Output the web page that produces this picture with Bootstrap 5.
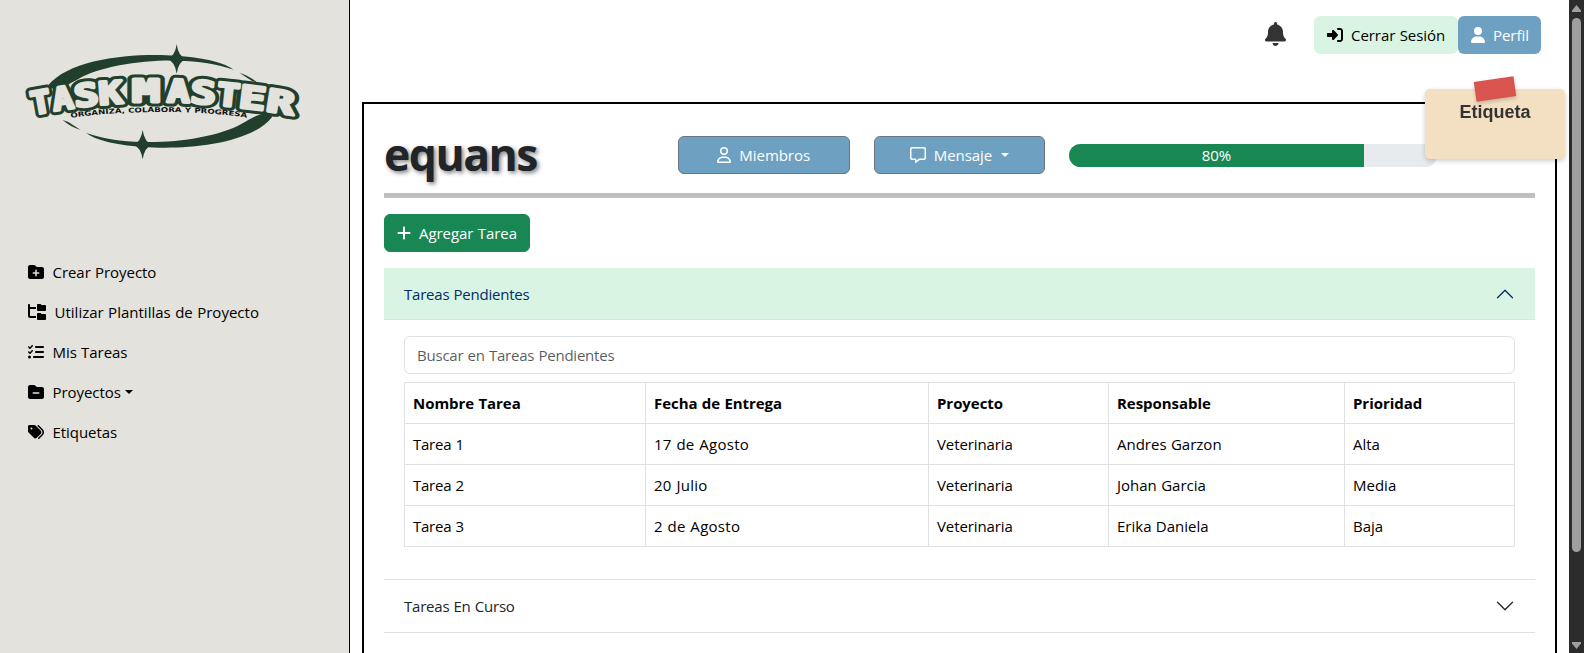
<!DOCTYPE html>
<html lang="es">
<head>
<meta charset="utf-8">
<meta name="viewport" content="width=device-width, initial-scale=1">
<title>Task Master</title>
<link href="https://cdn.jsdelivr.net/npm/bootstrap@5.3.0/dist/css/bootstrap.min.css" rel="stylesheet">
<style>
  body { font-family: "Open Sans", "Noto Sans", sans-serif; font-size: 15px; line-height: 24px; letter-spacing: -.05px; word-spacing: .5px; }
  .btn, .form-control, .accordion-button { font-size: 15px; line-height: 24px; letter-spacing: inherit; word-spacing: inherit; }
  .form-control, .accordion-button { letter-spacing: -.22px; }
  .ico { height: 16px; fill: currentColor; flex: none; }
  .sidebar { width: 350px; background: #e3e2dd; border-right: 1px solid #000; }
  .brand { margin: 30px 0 0 10px; width: 300px; height: 140px; }
  .side-menu { margin-top: 82px; padding-left: 28px; }
  .side-menu .nav-link { color: #000; padding: 8px 0; height: 40px; gap: 8.5px; }
  .side-menu .long-label { letter-spacing: .01px; }
  .topbar { height: 90px; padding: 16px 28px 0 0; }
  .bell { height: 24px; color: #333; margin: 6px 28px 0 0; }
  .btn-mint, .btn-mint:hover { background: #d9f4e3; color: #000; }
  .btn-sky, .btn-sky:hover, .btn-sky.btn-secondary { background: #6ea1c1; color: #fff; }
  .btn-sky.dropdown-toggle::after { margin-left: 1px; }
  .board { border: 2px solid #000; margin: 12px 12px 0; padding: 20px 20px 0; height: 1000px; }
  .project-name { font-size: 44.5px; line-height: 59px; font-weight: 700; letter-spacing: -1.5px; text-shadow: 2px 2px 4px rgba(0,0,0,.5); }
  .head-row { height: 69px; }
  .head-row .tool { padding-top: 12px; }
  .head-row .meter { padding-top: 20px; }
  .progress { height: 23px; border-radius: 12px; background: #e7ebee; font-size: 15px; line-height: 22px; }
  .progress-bar { background: #198754; padding-bottom: 1px; }
  .rule { height: 5px; background: #bfbfbf; margin-bottom: 16px; }
  .accordion-button { padding: 14px 20px; height: 52px; }
  .accordion-button.closed-head { color: #212529; background: #fff; }
  .accordion-button:not(.collapsed) { background: #d9f4e3; color: #052c65; box-shadow: inset 0 -1px 0 #dee2e6; }
  .accordion-button::after { width: 20px; height: 20px; background-size: 20px; }
  .accordion-button:not(.collapsed)::after { background-image: url("data:image/svg+xml,%3csvg xmlns='http://www.w3.org/2000/svg' viewBox='0 0 16 16' fill='%23052c65'%3e%3cpath fill-rule='evenodd' d='M1.646 4.646a.5.5 0 0 1 .708 0L8 10.293l5.646-5.647a.5.5 0 0 1 .708.708l-6 6a.5.5 0 0 1-.708 0l-6-6a.5.5 0 0 1 0-.708z'/%3e%3c/svg%3e"); }
  .accordion-body { padding: 16px 20px 32px; }
  .tasks { table-layout: fixed; }
  .tasks > :not(caption) > * > * { color: #000; height: 41px; }
  .tasks td { letter-spacing: 0; }
  .tasks td:nth-child(1) { letter-spacing: -.25px; }
  .tasks td:nth-child(2) { letter-spacing: .28px; }
  .tasks td:nth-child(3) { letter-spacing: -.1px; }
  .note-tag { position: fixed; left: 1425px; top: 89px; width: 140px; height: 70px; background: #f3dfc1; border-radius: 5px; box-shadow: 0 2px 5px rgba(0,0,0,.2); color: #333; font: bold 18px/22px "Liberation Sans", Arial, sans-serif; letter-spacing: 0; padding-top: 12px; text-align: center; z-index: 5; }
  .note-tag::before { content: ""; position: absolute; left: 50px; top: -10px; width: 40px; height: 20px; background: #d9534f; transform: rotate(-8deg); box-shadow: 0 2px 4px rgba(0,0,0,.2); }
  .scroll-rail { width: 15px; background: #2c2c2c; padding: 5px 0 4px; }
  .scroll-grip { width: 9px; height: 534px; border-radius: 5px; background: #9f9f9f; margin-top: 6px; }
  .scroll-rail svg { width: 9px; height: 7px; fill: #9f9f9f; }
</style>
</head>
<body>
<div class="d-flex vh-100 overflow-hidden">
  <aside class="sidebar flex-shrink-0">
    <svg class="brand d-block" viewBox="0 0 900 420" role="img" aria-label="Task Master">
      <defs>
        <path id="swoosh" d="M113 168C180 82 380 68 500 77C590 83 650 101 671 119C620 102 570 93 500 92C390 90 270 110 205 147C170 165 140 190 113 168ZM688 128Q720 138 742 158L725 152Z"/>
        <path id="spark" d="M0-44Q5-8 28 0Q5 8 0 44Q-5 8-28 0Q-5-8 0-44Z"/>
        <g id="letters" font-family="DejaVu Sans Mono" font-weight="bold" font-size="94">
          <text transform="translate(68 254) rotate(-10)" textLength="60" lengthAdjust="spacingAndGlyphs">T</text>
          <text transform="translate(132 242) rotate(-8)" textLength="62" lengthAdjust="spacingAndGlyphs">A</text>
          <text transform="translate(196 232) rotate(-6)" textLength="73" lengthAdjust="spacingAndGlyphs">S</text>
          <text transform="translate(268 224) rotate(-4)" textLength="72" lengthAdjust="spacingAndGlyphs">K</text>
          <text transform="translate(366 216)" textLength="84" lengthAdjust="spacingAndGlyphs">M</text>
          <text transform="translate(470 216) rotate(1)" textLength="68" lengthAdjust="spacingAndGlyphs">A</text>
          <text transform="translate(540 218) rotate(4)" textLength="76" lengthAdjust="spacingAndGlyphs">S</text>
          <text transform="translate(618 224) rotate(6)" textLength="68" lengthAdjust="spacingAndGlyphs">T</text>
          <text transform="translate(684 232) rotate(7)" textLength="80" lengthAdjust="spacingAndGlyphs">E</text>
          <text transform="translate(766 242) rotate(9)" textLength="84" lengthAdjust="spacingAndGlyphs">R</text>
        </g>
        <path id="motto" d="M182 263Q310 246 450 246Q600 246 712 263"/>
      </defs>
      <g fill="#213f2c">
        <use href="#swoosh"/>
        <use href="#swoosh" transform="rotate(180 450 214)"/>
        <use href="#spark" transform="translate(500 87)"/>
        <use href="#spark" transform="translate(398 344)"/>
      </g>
      <use href="#letters" fill="#213f2c" stroke="#213f2c" stroke-width="27" stroke-linejoin="round"/>
      <use href="#letters" fill="#e3e2dd" stroke="#e3e2dd" stroke-width="9" stroke-linejoin="round"/>
      <text font-family="DejaVu Sans" font-weight="bold" font-size="20" fill="#111"><textPath href="#motto" textLength="530" lengthAdjust="spacingAndGlyphs">ORGANIZA, COLABORA Y PROGRESA</textPath></text>
    </svg>
    <nav class="side-menu nav flex-column">
      <a class="nav-link d-flex align-items-center" href="#"><svg class="ico" viewBox="0 0 512 512"><path d="M512 416c0 35.3-28.7 64-64 64H64c-35.3 0-64-28.7-64-64V96C0 60.7 28.7 32 64 32H192c20.1 0 39.1 9.5 51.2 25.6l19.2 25.6c6 8.1 15.5 12.8 25.6 12.8H448c35.3 0 64 28.7 64 64V416zM232 376c0 13.3 10.7 24 24 24s24-10.7 24-24V312h64c13.3 0 24-10.7 24-24s-10.7-24-24-24H280V200c0-13.3-10.7-24-24-24s-24 10.7-24 24v64H168c-13.3 0-24 10.7-24 24s10.7 24 24 24h64v64z"/></svg>Crear Proyecto</a>
      <a class="nav-link d-flex align-items-center long-label" href="#"><svg class="ico" viewBox="0 0 576 512"><path d="M64 32C64 14.3 49.7 0 32 0S0 14.3 0 32v96V384c0 35.3 28.7 64 64 64H256V384H64V160H256V96H64V32zM288 192c0 17.7 14.3 32 32 32H544c17.7 0 32-14.3 32-32V64c0-17.7-14.3-32-32-32H445.3c-8.5 0-16.6-3.4-22.6-9.4L409.4 9.4c-6-6-14.1-9.4-22.6-9.4H320c-17.7 0-32 14.3-32 32V192zm0 288c0 17.7 14.3 32 32 32H544c17.7 0 32-14.3 32-32V352c0-17.7-14.3-32-32-32H445.3c-8.5 0-16.6-3.4-22.6-9.4l-13.3-13.3c-6-6-14.1-9.4-22.6-9.4H320c-17.7 0-32 14.3-32 32V480z"/></svg>Utilizar Plantillas de Proyecto</a>
      <a class="nav-link d-flex align-items-center" href="#"><svg class="ico" viewBox="0 0 512 512"><path d="M152.1 38.2c9.9 8.9 10.7 24 1.8 33.9l-72 80c-4.4 4.9-10.6 7.8-17.2 7.9s-12.9-2.4-17.6-7L7 113C-2.3 103.6-2.3 88.4 7 79s24.6-9.4 33.9 0l22.1 22.1 55.1-61.2c8.9-9.9 24-10.7 33.9-1.8zm0 160c9.9 8.9 10.7 24 1.8 33.9l-72 80c-4.4 4.9-10.6 7.8-17.2 7.9s-12.9-2.4-17.6-7L7 273c-9.4-9.4-9.4-24.6 0-33.9s24.6-9.4 33.9 0l22.1 22.1 55.1-61.2c8.9-9.9 24-10.7 33.9-1.8zM224 96c0-17.7 14.3-32 32-32H480c17.7 0 32 14.3 32 32s-14.3 32-32 32H256c-17.7 0-32-14.3-32-32zm0 160c0-17.7 14.3-32 32-32H480c17.7 0 32 14.3 32 32s-14.3 32-32 32H256c-17.7 0-32-14.3-32-32zM160 416c0-17.7 14.3-32 32-32H480c17.7 0 32 14.3 32 32s-14.3 32-32 32H192c-17.7 0-32-14.3-32-32zM48 368a48 48 0 1 1 0 96 48 48 0 1 1 0-96z"/></svg>Mis Tareas</a>
      <a class="nav-link d-flex align-items-center" href="#"><svg class="ico" viewBox="0 0 512 512"><path fill-rule="evenodd" d="M512 416c0 35.3-28.7 64-64 64H64c-35.3 0-64-28.7-64-64V96C0 60.7 28.7 32 64 32H192c20.1 0 39.1 9.5 51.2 25.6l19.2 25.6c6 8.1 15.5 12.8 25.6 12.8H448c35.3 0 64 28.7 64 64V416zM168 264c-13.3 0-24 10.7-24 24s10.7 24 24 24H344c13.3 0 24-10.7 24-24s-10.7-24-24-24H168z"/></svg><span class="dropdown-toggle">Proyectos</span></a>
      <a class="nav-link d-flex align-items-center" href="#"><svg class="ico" viewBox="0 0 512 512"><path d="M345 39.1L472.8 168.4c52.4 53 52.4 138.2 0 191.2L360.8 472.9c-9.3 9.4-24.5 9.5-33.9 .2s-9.5-24.5-.2-33.9L438.6 325.9c33.9-34.3 33.9-89.4 0-123.7L310.9 72.9c-9.3-9.4-9.2-24.6 .2-33.9s24.6-9.2 33.9 .2zM0 229.5V80C0 53.5 21.5 32 48 32H197.5c17 0 33.3 6.7 45.3 18.7l168 168c25 25 25 65.5 0 90.5L277.3 442.7c-25 25-65.5 25-90.5 0l-168-168C6.7 262.7 0 246.5 0 229.5zM144 144a32 32 0 1 0 -64 0 32 32 0 1 0 64 0z"/></svg>Etiquetas</a>
    </nav>
  </aside>

  <main class="flex-grow-1">
    <header class="topbar d-flex justify-content-end align-items-start">
      <svg class="ico bell" viewBox="0 0 448 512"><path d="M224 0c-17.7 0-32 14.3-32 32V51.2C119 66 64 130.6 64 208v18.8c0 47-17.3 92.4-48.5 127.6l-7.4 8.3c-8.4 9.4-10.4 22.9-5.3 34.4S19.4 416 32 416H416c12.6 0 24-7.4 29.2-18.9s3.1-25-5.3-34.4l-7.4-8.3C401.3 319.2 384 273.9 384 226.8V208c0-77.4-55-142-128-156.8V32c0-17.7-14.3-32-32-32zm45.3 493.3c12-12 18.7-28.3 18.7-45.3H224 160c0 17 6.7 33.3 18.7 45.3s28.3 18.7 45.3 18.7s33.3-6.7 45.3-18.7z"/></svg>
      <button class="btn btn-mint d-flex align-items-center gap-2" style="width:144px"><svg class="ico" viewBox="0 0 512 512"><path d="M217.9 105.9L340.7 228.7c7.2 7.2 11.3 17.1 11.3 27.3s-4.1 20.1-11.3 27.3L217.9 406.1c-6.4 6.4-15 9.9-24 9.9c-18.7 0-33.9-15.2-33.9-33.9l0-62.1L32 320c-17.7 0-32-14.3-32-32l0-64c0-17.7 14.3-32 32-32l128 0 0-62.1c0-18.7 15.2-33.9 33.9-33.9c9 0 17.6 3.6 24 9.9zM352 416l64 0c17.7 0 32-14.3 32-32l0-256c0-17.7-14.3-32-32-32l-64 0c-17.7 0-32-14.3-32-32s14.3-32 32-32l64 0c53 0 96 43 96 96l0 256c0 53-43 96-96 96l-64 0c-17.7 0-32-14.3-32-32s14.3-32 32-32z"/></svg><span class="text-nowrap">Cerrar Sesión</span></button>
      <button class="btn btn-sky d-flex align-items-center gap-2" style="width:83px"><svg class="ico" viewBox="0 0 448 512"><path d="M224 256A128 128 0 1 0 224 0a128 128 0 1 0 0 256zm-45.7 48C79.8 304 0 383.8 0 482.3C0 498.7 13.3 512 29.7 512H418.3c16.4 0 29.7-13.3 29.7-29.7C448 383.8 368.2 304 269.7 304H178.3z"/></svg>Perfil</button>
    </header>

    <section class="board">
      <div class="row head-row">
        <div class="col-3"><h1 class="project-name mb-0">equans</h1></div>
        <div class="col-2 tool"><button class="btn btn-secondary btn-sky w-100 d-flex align-items-center justify-content-center gap-2"><svg class="ico" viewBox="0 0 448 512"><path d="M304 128a80 80 0 1 0 -160 0 80 80 0 1 0 160 0zM96 128a128 128 0 1 1 256 0A128 128 0 1 1 96 128zM49.3 464H398.7c-8.9-63.3-63.3-112-129-112H178.3c-65.7 0-120.1 48.7-129 112zM0 482.3C0 383.8 79.8 304 178.3 304h91.4C368.2 304 448 383.8 448 482.3c0 16.4-13.3 29.7-29.7 29.7H29.7C13.3 512 0 498.7 0 482.3z"/></svg>Miembros</button></div>
        <div class="col-2 tool"><button class="btn btn-secondary btn-sky w-100 d-flex align-items-center justify-content-center gap-2 dropdown-toggle"><svg class="ico" viewBox="0 0 512 512"><path d="M160 368c26.5 0 48 21.5 48 48v16l72.5-54.4c8.3-6.2 18.4-9.6 28.8-9.6H448c8.8 0 16-7.2 16-16V64c0-8.8-7.2-16-16-16H64c-8.8 0-16 7.2-16 16V352c0 8.8 7.2 16 16 16h96zm48 124l-.2 .2-5.1 3.8-17.1 12.8c-4.8 3.6-11.3 4.2-16.8 1.5s-8.8-8.2-8.8-14.3V474.7v-6.4V468v-4V416H112 64c-35.3 0-64-28.7-64-64V64C0 28.7 28.7 0 64 0H448c35.3 0 64 28.7 64 64V352c0 35.3-28.7 64-64 64H309.3L208 492z"/></svg>Mensaje</button></div>
        <div class="col-4 meter"><div class="progress"><div class="progress-bar" style="width:80%">80%</div></div></div>
      </div>
      <div class="rule"></div>
      <button class="btn btn-success d-flex align-items-center gap-2 mb-3" style="width:146px"><svg class="ico" viewBox="0 0 448 512"><path d="M256 80c0-17.7-14.3-32-32-32s-32 14.3-32 32V224H48c-17.7 0-32 14.3-32 32s14.3 32 32 32H192V432c0 17.7 14.3 32 32 32s32-14.3 32-32V288H400c17.7 0 32-14.3 32-32s-14.3-32-32-32H256V80z"/></svg><span class="text-nowrap">Agregar Tarea</span></button>

      <div class="accordion accordion-flush">
        <div class="accordion-item">
          <div class="accordion-header"><button class="accordion-button">Tareas Pendientes</button></div>
          <div class="accordion-body">
            <input class="form-control mb-2" placeholder="Buscar en Tareas Pendientes">
            <table class="table table-bordered tasks mb-0">
              <colgroup><col style="width:241px"><col style="width:283px"><col style="width:180px"><col style="width:236px"><col></colgroup>
              <thead><tr><th>Nombre Tarea</th><th>Fecha de Entrega</th><th>Proyecto</th><th>Responsable</th><th>Prioridad</th></tr></thead>
              <tbody>
                <tr><td>Tarea 1</td><td>17 de Agosto</td><td>Veterinaria</td><td>Andres Garzon</td><td>Alta</td></tr>
                <tr><td>Tarea 2</td><td>20 Julio</td><td>Veterinaria</td><td>Johan Garcia</td><td>Media</td></tr>
                <tr><td>Tarea 3</td><td>2 de Agosto</td><td>Veterinaria</td><td>Erika Daniela</td><td>Baja</td></tr>
              </tbody>
            </table>
          </div>
        </div>
        <div class="accordion-item border-bottom">
          <div class="accordion-header"><button class="accordion-button collapsed closed-head">Tareas En Curso</button></div>
        </div>
      </div>
    </section>
  </main>

  <div class="scroll-rail d-flex flex-column align-items-center flex-shrink-0">
    <svg viewBox="0 0 9 7"><path d="M4.5 0L9 5.5V7H0V5.5Z"/></svg>
    <div class="scroll-grip"></div>
    <svg class="mt-auto" viewBox="0 0 9 7"><path d="M4.5 7L9 1.5V0H0V1.5Z"/></svg>
  </div>
</div>
<div class="note-tag">Etiqueta</div>
<script src="https://cdn.jsdelivr.net/npm/bootstrap@5.3.0/dist/js/bootstrap.bundle.min.js"></script>
</body>
</html>
